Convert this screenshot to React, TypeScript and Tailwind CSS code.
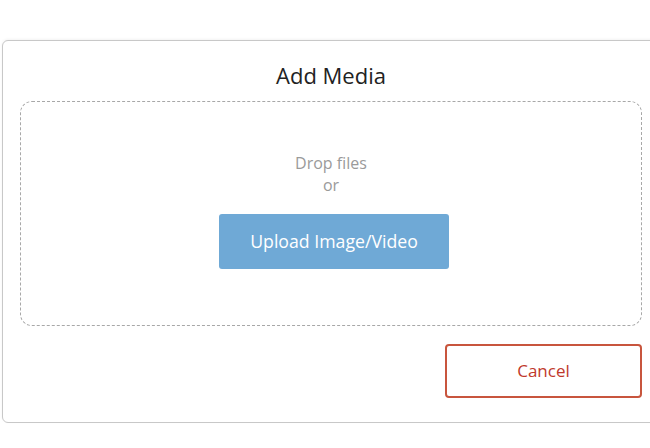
export default function App() {
  return (
    <div className="h-[448px] w-[650px] overflow-hidden bg-white pl-[2px] pt-[40px] font-['Open_Sans',sans-serif]">
      <div className="w-[658px] rounded-md border border-[#c8c8c8] bg-white px-[17px] pb-[24px] pt-[18px] shadow-[0_-1px_3px_rgba(0,0,0,0.05)]">
        <h2 className="text-center text-[22px] leading-[32px] text-[#222]">Add Media</h2>
        <div className="mt-[10px] flex h-[225px] flex-col items-center rounded-xl border border-dashed border-[#a8a8a8] pt-[50px]">
          <p className="text-[16px] leading-[22px] text-[#9a9a9a]">Drop files</p>
          <p className="text-[16px] leading-[22px] text-[#9a9a9a]">or</p>
          <button className="ml-[6px] mt-[18px] h-[55px] rounded-[3px] bg-[#6fa9d6] px-[31px] text-[17.7px] text-white">
            Upload Image/Video
          </button>
        </div>
        <div className="mt-[18px] flex justify-end">
          <button className="h-[54px] w-[197px] rounded-[4px] border-2 border-[#c8553d] bg-white text-[17px] text-[#c0392b]">
            Cancel
          </button>
        </div>
      </div>
    </div>
  );
}
